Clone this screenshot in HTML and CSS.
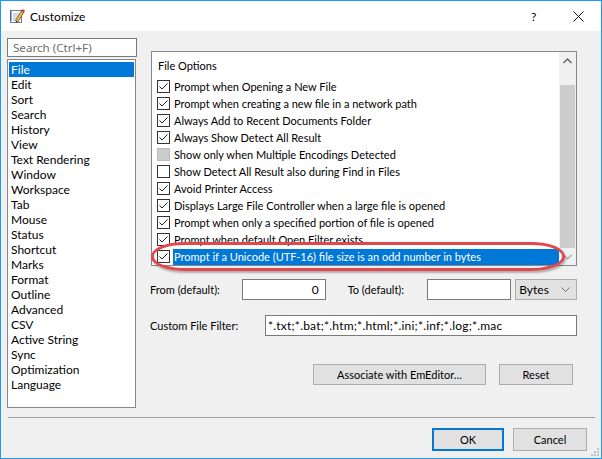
FILE: index.html
```html
<!DOCTYPE html>
<html>
<head>
<meta charset="utf-8">
<title>Customize</title>
<link rel="stylesheet" href="styles.css">
</head>
<body>
<div class="window">
  <div class="titlebar">
    <svg class="app-icon" width="16" height="16" viewBox="0 0 16 16">
      <rect x="1.5" y="2.5" width="11" height="12" fill="#fff" stroke="#6d7aa6"/>
      <path d="M1 4h2M1 6h2M1 8h2M1 10h2M1 12h2" stroke="#3b4f8c" stroke-width="1"/>
      <path d="M4 6h6M4 8h5M4 10h4M4 12h3" stroke="#a9b4d2" stroke-width="1"/>
      <path d="M7.5 13.5 L14 3" stroke="#8a5a1c" stroke-width="3.4" stroke-linecap="butt"/>
      <path d="M7.5 13.5 L14 3" stroke="#f2c14a" stroke-width="1.8" stroke-linecap="butt"/>
      <path d="M6.6 15 L7.2 12.6 L8.6 13.5 Z" fill="#3a2a10"/>
      <path d="M13.2 4.3 L14.8 1.8" stroke="#d04a4a" stroke-width="3"/>
    </svg>
    <span class="title">Customize</span>
    <span class="help">?</span>
    <svg class="close" width="11" height="11" viewBox="0 0 11 11">
      <path d="M0.5 0.5 L10.5 10.5 M10.5 0.5 L0.5 10.5" stroke="#111" stroke-width="1"/>
    </svg>
  </div>

  <div class="main">
    <div class="leftcol">
      <div class="search">Search (Ctrl+F)</div>
      <ul class="catlist">
        <li class="sel">File</li>
        <li>Edit</li>
        <li>Sort</li>
        <li>Search</li>
        <li>History</li>
        <li>View</li>
        <li>Text Rendering</li>
        <li>Window</li>
        <li>Workspace</li>
        <li>Tab</li>
        <li>Mouse</li>
        <li>Status</li>
        <li>Shortcut</li>
        <li>Marks</li>
        <li>Format</li>
        <li>Outline</li>
        <li>Advanced</li>
        <li>CSV</li>
        <li>Active String</li>
        <li>Sync</li>
        <li>Optimization</li>
        <li>Language</li>
      </ul>
    </div>

    <div class="rightcol">
      <div class="optbox">
        <div class="optlist">
          <div class="opthead">File Options</div>
          <div class="opt"><svg class="cb" width="13" height="13" viewBox="0 0 13 13"><rect x="0.5" y="0.5" width="12" height="12" fill="#fff" stroke="#333"/><path d="M2.5 6.5 L5 9 L10.5 3.5" fill="none" stroke="#222"/></svg><span class="lbl">Prompt when Opening a New File</span></div>
          <div class="opt"><svg class="cb" width="13" height="13" viewBox="0 0 13 13"><rect x="0.5" y="0.5" width="12" height="12" fill="#fff" stroke="#333"/><path d="M2.5 6.5 L5 9 L10.5 3.5" fill="none" stroke="#222"/></svg><span class="lbl">Prompt when creating a new file in a network path</span></div>
          <div class="opt"><svg class="cb" width="13" height="13" viewBox="0 0 13 13"><rect x="0.5" y="0.5" width="12" height="12" fill="#fff" stroke="#333"/><path d="M2.5 6.5 L5 9 L10.5 3.5" fill="none" stroke="#222"/></svg><span class="lbl">Always Add to Recent Documents Folder</span></div>
          <div class="opt"><svg class="cb" width="13" height="13" viewBox="0 0 13 13"><rect x="0.5" y="0.5" width="12" height="12" fill="#fff" stroke="#333"/><path d="M2.5 6.5 L5 9 L10.5 3.5" fill="none" stroke="#222"/></svg><span class="lbl">Always Show Detect All Result</span></div>
          <div class="opt"><svg class="cb" width="13" height="13" viewBox="0 0 13 13"><rect x="0.5" y="0.5" width="12" height="12" fill="#cccccc" stroke="#bcbcbc"/></svg><span class="lbl">Show only when Multiple Encodings Detected</span></div>
          <div class="opt"><svg class="cb" width="13" height="13" viewBox="0 0 13 13"><rect x="0.5" y="0.5" width="12" height="12" fill="#fff" stroke="#333"/></svg><span class="lbl">Show Detect All Result also during Find in Files</span></div>
          <div class="opt"><svg class="cb" width="13" height="13" viewBox="0 0 13 13"><rect x="0.5" y="0.5" width="12" height="12" fill="#fff" stroke="#333"/><path d="M2.5 6.5 L5 9 L10.5 3.5" fill="none" stroke="#222"/></svg><span class="lbl">Avoid Printer Access</span></div>
          <div class="opt"><svg class="cb" width="13" height="13" viewBox="0 0 13 13"><rect x="0.5" y="0.5" width="12" height="12" fill="#fff" stroke="#333"/><path d="M2.5 6.5 L5 9 L10.5 3.5" fill="none" stroke="#222"/></svg><span class="lbl">Displays Large File Controller when a large file is opened</span></div>
          <div class="opt"><svg class="cb" width="13" height="13" viewBox="0 0 13 13"><rect x="0.5" y="0.5" width="12" height="12" fill="#fff" stroke="#333"/><path d="M2.5 6.5 L5 9 L10.5 3.5" fill="none" stroke="#222"/></svg><span class="lbl">Prompt when only a specified portion of file is opened</span></div>
          <div class="opt"><svg class="cb" width="13" height="13" viewBox="0 0 13 13"><rect x="0.5" y="0.5" width="12" height="12" fill="#fff" stroke="#333"/><path d="M2.5 6.5 L5 9 L10.5 3.5" fill="none" stroke="#222"/></svg><span class="lbl">Prompt when default Open Filter exists</span></div>
          <div class="opt selected"><svg class="cb" width="13" height="13" viewBox="0 0 13 13"><rect x="0.5" y="0.5" width="12" height="12" fill="#fff" stroke="#333"/><path d="M2.5 6.5 L5 9 L10.5 3.5" fill="none" stroke="#222"/></svg><span class="lbl">Prompt if a Unicode (UTF-16) file size is an odd number in bytes</span></div>
        </div>
        <div class="vscroll">
          <div class="sb-arrow">
            <svg width="17" height="17" viewBox="0 0 17 17"><path d="M4.5 11 L8.5 7 L12.5 11" fill="none" stroke="#606060" stroke-width="1.4"/></svg>
          </div>
          <div class="sb-track"><div class="sb-thumb"></div></div>
          <div class="sb-arrow">
            <svg width="17" height="17" viewBox="0 0 17 17"><path d="M4.5 7 L8.5 11 L12.5 7" fill="none" stroke="#a8a8a8" stroke-width="1.2"/></svg>
          </div>
        </div>
        <div class="annot"></div>
      </div>

      <div class="range-row">
        <span class="lbl-from">From (default):</span>
        <div class="field num">0</div>
        <span class="lbl-to">To (default):</span>
        <div class="field num2"></div>
        <div class="combo">
          <span>Bytes</span>
          <svg width="9" height="5" viewBox="0 0 9 5"><path d="M0.5 0.5 L4.5 4.5 L8.5 0.5" fill="none" stroke="#707070"/></svg>
        </div>
      </div>

      <div class="filter-row">
        <span class="lbl-filter">Custom File Filter:</span>
        <div class="field filter">*.txt;*.bat;*.htm;*.html;*.ini;*.inf;*.log;*.mac</div>
      </div>

      <div class="btn-row">
        <div class="btn assoc">Associate with EmEditor…</div>
        <div class="btn reset">Reset</div>
      </div>
    </div>
  </div>

  <div class="sep"></div>

  <div class="footer">
    <div class="btn ok">OK</div>
    <div class="btn cancel">Cancel</div>
  </div>

  <svg class="grip" width="10" height="10" viewBox="0 0 10 10">
    <rect x="7" y="1" width="2" height="2" fill="#c2c2c2"/>
    <rect x="4" y="4" width="2" height="2" fill="#c2c2c2"/>
    <rect x="7" y="4" width="2" height="2" fill="#c2c2c2"/>
    <rect x="1" y="7" width="2" height="2" fill="#c2c2c2"/>
    <rect x="4" y="7" width="2" height="2" fill="#c2c2c2"/>
    <rect x="7" y="7" width="2" height="2" fill="#c2c2c2"/>
  </svg>
</div>
</body>
</html>
```

FILE: styles.css
```css
* { box-sizing: border-box; }

html, body {
  margin: 0;
  padding: 0;
  background: #f0f0f0;
}

body {
  font-family: "Lato", "Noto Sans", sans-serif;
  font-size: 12px;
  color: #000;
}

.window {
  position: relative;
  width: 602px;
  height: 459px;
  border: 1px solid #1b9cf2;
  background: #f0f0f0;
  display: flex;
  flex-direction: column;
  overflow: hidden;
}

/* ---------- title bar ---------- */
.titlebar {
  height: 30px;
  flex: none;
  background: #fff;
  display: flex;
  align-items: center;
}

.app-icon {
  margin-left: 8px;
  flex: none;
}

.title {
  margin-left: 5px;
  font-size: 12px;
  color: #000;
}

.help {
  margin-left: auto;
  font-size: 12px;
  width: 6px;
}

.close {
  margin-left: 36px;
  margin-right: 17px;
  flex: none;
}

/* ---------- main ---------- */
.main {
  height: 386px;
  flex: none;
  display: flex;
  padding-left: 6px;
}

.leftcol {
  width: 130px;
  flex: none;
  padding-top: 7px;
}

.search {
  width: 130px;
  height: 19px;
  border: 1px solid #7a7a7a;
  background: #fff;
  color: #6d6d6d;
  padding-left: 5px;
  line-height: 17px;
  font-family: "Noto Sans", "Lato", sans-serif;
  font-size: 11.6px;
  white-space: nowrap;
}

.catlist {
  list-style: none;
  margin: 2px 0 0 0;
  width: 129px;
  height: 349px;
  border: 1px solid #828790;
  background: #fff;
  padding: 2px 1px;
}

.catlist li {
  height: 15px;
  line-height: 15px;
  padding-left: 2px;
  white-space: nowrap;
}

.catlist li.sel {
  background: #0078d7;
  color: #fff;
}

/* ---------- right column ---------- */
.rightcol {
  width: 426px;
  margin-left: 14px;
  padding-top: 20px;
  font-size: 11px;
}

.optbox {
  position: relative;
  height: 215px;
  border: 1px solid #828790;
  background: #fff;
  display: flex;
}

.optlist {
  flex: 1;
  padding: 5px 0 0 5px;
  overflow: hidden;
}

.opthead {
  height: 17px;
  line-height: 17px;
  padding-left: 1px;
  margin-bottom: 4px;
}

.opt {
  height: 17px;
  display: flex;
  align-items: center;
}

.cb {
  flex: none;
  display: block;
}

.opt .lbl {
  margin-left: 3px;
  padding-left: 1px;
  flex: 1;
  height: 16px;
  line-height: 16px;
  white-space: nowrap;
}

.opt.selected .lbl {
  background: #0078d7;
  color: #fff;
}

.vscroll {
  width: 17px;
  flex: none;
  background: #f0f0f0;
  display: flex;
  flex-direction: column;
}

.sb-arrow {
  height: 17px;
  flex: none;
}

.sb-arrow svg {
  display: block;
}

.sb-track {
  flex: 1;
  padding: 16px 1px 0 1px;
}

.sb-thumb {
  height: 163px;
  background: #cdcdcd;
}

.annot {
  position: absolute;
  left: -1px;
  top: 190px;
  width: 414px;
  height: 29px;
  border: 3px solid #e2474b;
  border-radius: 34px / 14px;
  box-shadow: 1px 2px 2px rgba(0, 0, 0, 0.28);
  pointer-events: none;
}

/* ---------- fields ---------- */
.range-row {
  margin-top: 13px;
  height: 21px;
  display: flex;
  align-items: center;
}

.lbl-from {
  width: 91px;
  margin-left: -1px;
  flex: none;
}

.field {
  height: 21px;
  border: 1px solid #7a7a7a;
  background: #fff;
  line-height: 19px;
  font-size: 12px;
  white-space: nowrap;
}

.field.num {
  width: 84px;
  text-align: right;
  padding-right: 6px;
  margin-left: 1px;
}

.lbl-to {
  margin-left: 22px;
  width: 79px;
  flex: none;
}

.field.num2 {
  width: 85px;
}

.combo {
  margin-left: 4px;
  width: 62px;
  height: 21px;
  border: 1px solid #adadad;
  background: #e1e1e1;
  display: flex;
  align-items: center;
  justify-content: space-between;
  padding: 0 6px 0 3px;
  font-size: 12px;
}

.combo svg {
  display: block;
}

.filter-row {
  margin-top: 15px;
  height: 21px;
  display: flex;
  align-items: center;
}

.lbl-filter {
  width: 115px;
  margin-left: -1px;
  flex: none;
}

.field.filter {
  width: 312px;
  padding-left: 2px;
  letter-spacing: 0.2px;
}

/* ---------- buttons ---------- */
.btn-row {
  margin-top: 28px;
  display: flex;
  justify-content: flex-end;
  padding-right: 4px;
  gap: 13px;
}

.btn {
  height: 21px;
  border: 1px solid #adadad;
  background: #e1e1e1;
  display: flex;
  align-items: center;
  justify-content: center;
  white-space: nowrap;
  font-size: 11px;
}

.btn.assoc { width: 173px; }
.btn.reset { width: 74px; }

.sep {
  height: 1px;
  flex: none;
  background: #a0a0a0;
  margin: 0 6px 0 7px;
}

.footer {
  flex: 1;
  display: flex;
  justify-content: flex-end;
  align-items: flex-start;
  padding-top: 10px;
  padding-right: 14px;
  gap: 9px;
}

.footer .btn {
  height: 23px;
}

.btn.ok {
  width: 72px;
  border: 2px solid #0078d7;
}

.btn.cancel {
  width: 74px;
}

.grip {
  position: absolute;
  right: 1px;
  bottom: 1px;
}
```
